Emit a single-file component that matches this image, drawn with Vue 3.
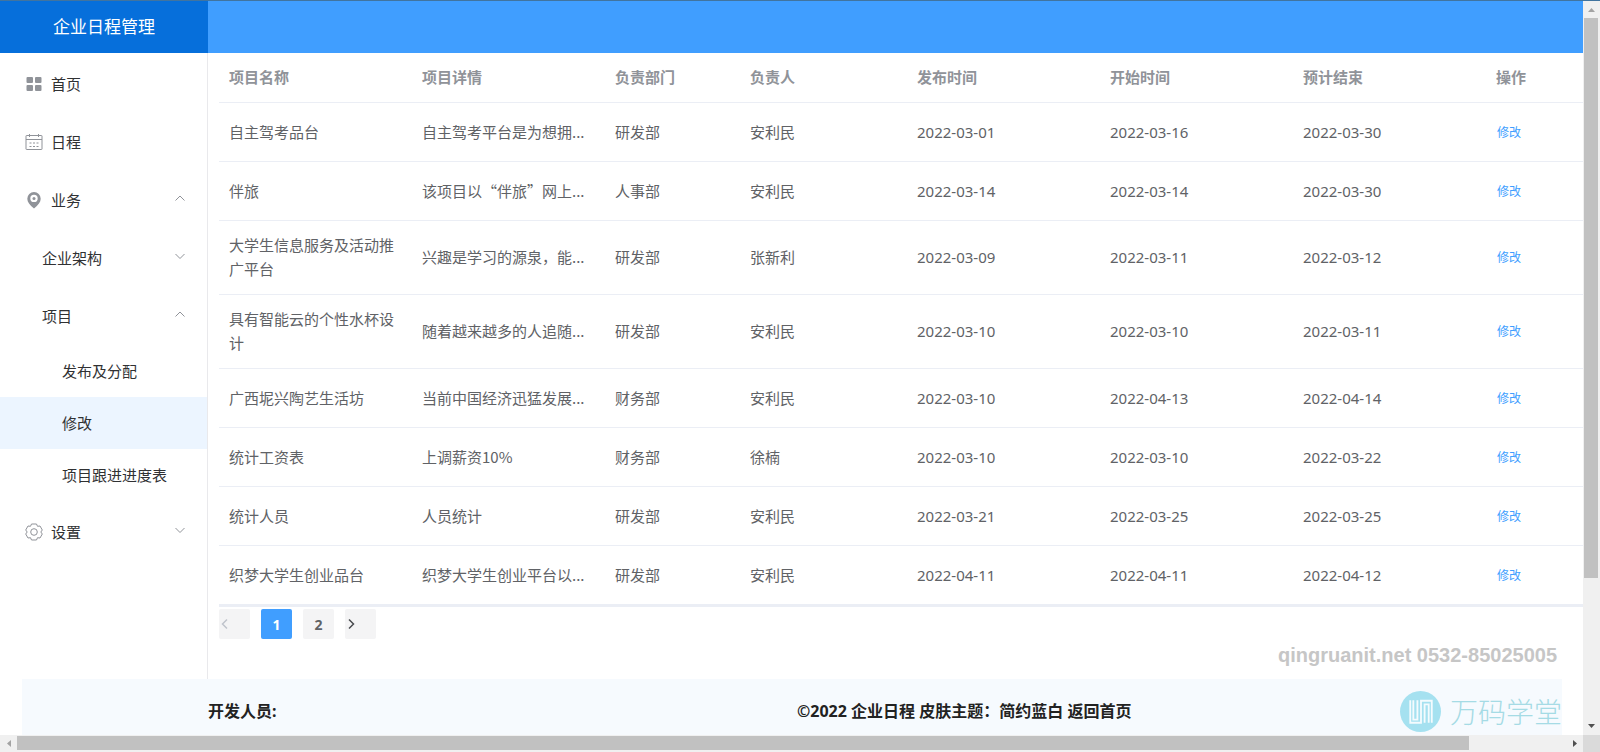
<script setup>
const columns = [
  { key: 'name', label: '项目名称', cls: 'wide' },
  { key: 'detail', label: '项目详情', cls: 'wide' },
  { key: 'dept', label: '负责部门', cls: 'dept' },
  { key: 'owner', label: '负责人', cls: 'owner' },
  { key: 'published', label: '发布时间', cls: 'wide' },
  { key: 'start', label: '开始时间', cls: 'wide' },
  { key: 'end', label: '预计结束', cls: 'wide' },
]

const rows = [
  ['自主驾考品台', '自主驾考平台是为想拥...', '研发部', '安利民', '2022-03-01', '2022-03-16', '2022-03-30'],
  ['伴旅', '该项目以“伴旅”网上...', '人事部', '安利民', '2022-03-14', '2022-03-14', '2022-03-30'],
  ['大学生信息服务及活动推广平台', '兴趣是学习的源泉，能...', '研发部', '张新利', '2022-03-09', '2022-03-11', '2022-03-12'],
  ['具有智能云的个性水杯设计', '随着越来越多的人追随...', '研发部', '安利民', '2022-03-10', '2022-03-10', '2022-03-11'],
  ['广西坭兴陶艺生活坊', '当前中国经济迅猛发展...', '财务部', '安利民', '2022-03-10', '2022-04-13', '2022-04-14'],
  ['统计工资表', '上调薪资10%', '财务部', '徐楠', '2022-03-10', '2022-03-10', '2022-03-22'],
  ['统计人员', '人员统计', '研发部', '安利民', '2022-03-21', '2022-03-25', '2022-03-25'],
  ['织梦大学生创业品台', '织梦大学生创业平台以...', '研发部', '安利民', '2022-04-11', '2022-04-11', '2022-04-12'],
]

const menu = [
  { label: '首页', icon: 'grid', level: 1 },
  { label: '日程', icon: 'calendar', level: 1 },
  { label: '业务', icon: 'pin', level: 1, arrow: 'up' },
  { label: '企业架构', level: 2, arrow: 'down' },
  { label: '项目', level: 2, arrow: 'up' },
  { label: '发布及分配', level: 3 },
  { label: '修改', level: 3, active: true },
  { label: '项目跟进进度表', level: 3 },
  { label: '设置', icon: 'gear', level: 1, arrow: 'down' },
]
</script>

<template>
  <div class="window">
    <div class="view">
      <header class="top">
        <h1 class="brand">企业日程管理</h1>
      </header>

      <div class="body">
        <nav class="side">
          <a
            v-for="item in menu"
            :key="item.label"
            href="#"
            class="item"
            :class="['level-' + item.level, { active: item.active }]"
          >
            <svg v-if="item.icon === 'grid'" class="icon" viewBox="0 0 18 18" fill="#909399">
              <rect x="1.500" y="2" width="6.500" height="6" rx="1" />
              <rect x="10" y="2" width="6.500" height="6" rx="1" />
              <rect x="1.500" y="10" width="6.500" height="6" rx="1" />
              <rect x="10" y="10" width="6.500" height="6" rx="1" />
            </svg>
            <svg v-else-if="item.icon === 'calendar'" class="icon" viewBox="0 0 18 18" fill="none" stroke="#909399">
              <rect x="1" y="2.500" width="16" height="14" rx="0.500" />
              <path d="M1 6.500H17M4.500 1V4M13.500 1V4" />
              <path d="M4.500 10H6.500M8 10H10M11.500 10H13.500M4.500 13.500H6.500M8 13.500H10M11.500 13.500H13.500" />
            </svg>
            <svg v-else-if="item.icon === 'pin'" class="icon" viewBox="0 0 18 18" fill="#909399">
              <path
                fill-rule="evenodd"
                d="M9 1a6.700 6.700 0 0 1 6.700 6.700c0 3.200-2.400 6.300-6.700 9.800C4.700 14 2.300 10.900 2.300 7.700A6.700 6.700 0 0 1 9 1zM9 3.700a3.700 3.700 0 1 0 0 7.400 3.700 3.700 0 0 0 0-7.400z"
              />
              <circle cx="9" cy="7.400" r="1.500" />
            </svg>
            <svg v-else-if="item.icon === 'gear'" class="icon" viewBox="0 0 18 18" fill="none" stroke="#909399" stroke-linejoin="round">
              <path d="M6.500 1h5l1 2.300 2.500-.3 2.300 4-1.500 2 1.500 2-2.300 4-2.500-.3-1 2.300h-5l-1-2.300-2.500.3-2.300-4 1.500-2-1.500-2 2.300-4 2.500.3z" />
              <circle cx="9" cy="9" r="3.300" />
            </svg>
            <span class="label">{{ item.label }}</span>
            <svg v-if="item.arrow" class="arrow" viewBox="0 0 10 10" fill="none" stroke="#909399">
              <path :d="item.arrow === 'up' ? 'M0.500 7.500L5 3L9.500 7.500' : 'M0.500 3L5 7.500L9.500 3'" />
            </svg>
          </a>
        </nav>

        <main class="main">
          <table class="table">
            <colgroup>
              <col v-for="c in columns" :key="c.key" :class="c.cls" />
              <col class="action" />
            </colgroup>
            <thead>
              <tr>
                <th v-for="c in columns" :key="c.key" scope="col">{{ c.label }}</th>
                <th scope="col">操作</th>
              </tr>
            </thead>
            <tbody>
              <tr v-for="(row, i) in rows" :key="i">
                <td v-for="(cell, j) in row" :key="j" :class="columns[j].key">{{ cell }}</td>
                <td><button type="button" class="edit">修改</button></td>
              </tr>
            </tbody>
          </table>

          <div class="pager">
            <button type="button" class="page step" disabled aria-label="上一页">
              <svg viewBox="0 0 12 12" fill="none" stroke="#c0c4cc" stroke-width="1.500"><path d="M8 1.500L3.500 6L8 10.500" /></svg>
            </button>
            <button type="button" class="page current">1</button>
            <button type="button" class="page">2</button>
            <button type="button" class="page step" aria-label="下一页">
              <svg viewBox="0 0 12 12" fill="none" stroke="#4a4c50" stroke-width="1.500"><path d="M4 1.500L8.500 6L4 10.500" /></svg>
            </button>
          </div>
        </main>
      </div>

      <footer class="foot">
        <span class="dev">开发人员:</span>
        <span class="copy">©2022 企业日程 皮肤主题：简约蓝白 <a href="#">返回首页</a></span>
      </footer>

      <div class="mark">
        <span class="contact">qingruanit.net 0532-85025005</span>
        <span class="school">
          <svg viewBox="0 0 40 40" fill="none">
            <circle cx="20" cy="20" r="20" fill="#a5e1f0" />
            <path
              d="M10 9V31H20.500V9.500H31V31M13 9V28H17V9M24 31V13H28V31"
              stroke="#f4fbfe"
              stroke-width="1.800"
            />
          </svg>
          <span>万码学堂</span>
        </span>
      </div>
    </div>

    <div class="bar vertical">
      <svg viewBox="0 0 17 17"><path d="M5 11L8.500 7L12 11Z" fill="#a3a3a3" /></svg>
      <div class="track"><div class="thumb"></div></div>
      <svg viewBox="0 0 17 17"><path d="M5 6L8.500 10L12 6Z" fill="#505050" /></svg>
    </div>
    <div class="bar horizontal">
      <svg viewBox="0 0 17 17"><path d="M11 5L7 8.500L11 12Z" fill="#a3a3a3" /></svg>
      <div class="track"><div class="thumb"></div></div>
      <svg viewBox="0 0 17 17"><path d="M7 5L11 8.500L7 12Z" fill="#505050" /></svg>
    </div>
    <div class="corner"></div>
  </div>
</template>

<style>
body {
  margin: 0;
}
</style>

<style scoped>
.window {
  display: grid;
  grid-template-columns: minmax(0, 1fr) 17px;
  grid-template-rows: minmax(0, 1fr) 17px;
  height: 100vh;
  box-sizing: border-box;
  border-top: 1px solid #41749f;
  overflow: hidden;
  background: #fff;
  font-family: "Noto Sans", "Noto Sans CJK SC", sans-serif;
  font-size: 15px;
  color: #606266;
}
.view {
  position: relative;
  display: flex;
  flex-direction: column;
  min-height: 0;
  overflow: hidden;
}
.top {
  display: flex;
  flex: none;
  height: 52px;
  background: #409eff;
}
.brand {
  width: 208px;
  margin: 0;
  background: #066fdb;
  color: #fff;
  font-size: 17px;
  font-weight: 400;
  line-height: 52px;
  text-align: center;
}
.body {
  display: flex;
  flex: 1;
  min-height: 0;
}
.side {
  flex: none;
  width: 208px;
  box-sizing: border-box;
  padding-top: 2px;
  border-right: 1px solid #e9e9ec;
}
.item {
  display: flex;
  align-items: center;
  height: 58px;
  padding: 0 22px 0 25px;
  color: #303133;
  text-decoration: none;
}
.level-2 {
  padding-left: 42px;
}
.level-3 {
  height: 52px;
  padding-left: 62px;
}
.level-3 + .level-1 {
  margin-top: 2px;
}
.active {
  background: #ecf5ff;
}
.label {
  padding-bottom: 2px;
}
.icon {
  width: 18px;
  height: 18px;
  margin-right: 8px;
}
.arrow {
  width: 10px;
  height: 10px;
  margin: 0 0 4px auto;
}
.main {
  flex: 1;
  min-width: 0;
  padding-left: 11px;
}
.table {
  width: 100%;
  table-layout: fixed;
  border-collapse: separate;
  border-spacing: 0;
  border-bottom: 2px solid #ebeef5;
}
.wide {
  width: 193px;
}
.dept {
  width: 135px;
}
.owner {
  width: 167px;
}
.action {
  width: 97px;
}
th,
td {
  box-sizing: border-box;
  height: 59px;
  padding: 12px 10px 13px;
  border-bottom: 1px solid #ebeef5;
  line-height: 24px;
  text-align: left;
  vertical-align: middle;
}
th {
  height: 50px;
  color: #909399;
  font-weight: 700;
}
.detail {
  font-family: "Noto Sans CJK SC", sans-serif;
}
.edit {
  padding: 0 1px;
  border: 0;
  background: none;
  color: #409eff;
  font: inherit;
  font-size: 12px;
}
.pager {
  display: flex;
  gap: 11px;
  padding-top: 2px;
}
.page {
  width: 31px;
  height: 30px;
  padding: 0;
  border: 0;
  border-radius: 2px;
  background: #f4f4f5;
  color: #606266;
  font: inherit;
  font-size: 14px;
  font-weight: 700;
}
.current {
  background: #409eff;
  color: #fff;
}
.step {
  text-align: left;
}
.step svg {
  display: block;
  width: 12px;
  height: 12px;
}
.foot {
  display: grid;
  grid-template-columns: 186fr 589fr 765fr;
  align-items: center;
  flex: none;
  height: 56px;
  margin: 0 21px 0 22px;
  padding-top: 5px;
  box-sizing: border-box;
  background: #f6fafe;
  color: #222;
  font-size: 16px;
  font-weight: 700;
}
.dev {
  grid-column: 2;
}
.foot a {
  color: inherit;
  text-decoration: none;
}
.mark {
  position: absolute;
  right: 21px;
  bottom: 3px;
  display: flex;
  flex-direction: column;
  align-items: flex-end;
  gap: 24px;
}
.contact {
  margin-right: 5px;
  color: #c6c6c6;
  font: 700 20px/24px "Liberation Sans", sans-serif;
}
.school {
  display: flex;
  align-items: center;
  gap: 9px;
  color: #a5dbe5;
  font-size: 28px;
  font-weight: 300;
  line-height: 40px;
}
.school svg {
  width: 41px;
  height: 41px;
}
.bar {
  display: flex;
  background: #f0f0f0;
}
.bar svg {
  flex: none;
  width: 17px;
  height: 17px;
}
.track {
  display: flex;
  flex: 1;
}
.thumb {
  background: #c1c1c1;
}
.vertical {
  flex-direction: column;
}
.vertical .track {
  flex-direction: column;
}
.vertical .thumb {
  height: calc(100% * 4 / 5);
  margin: 0 2px 0 1px;
}
.horizontal .thumb {
  width: calc(100% * 15 / 16);
  margin: 1px 0 2px;
}
.corner {
  background: #dadada;
}
</style>
